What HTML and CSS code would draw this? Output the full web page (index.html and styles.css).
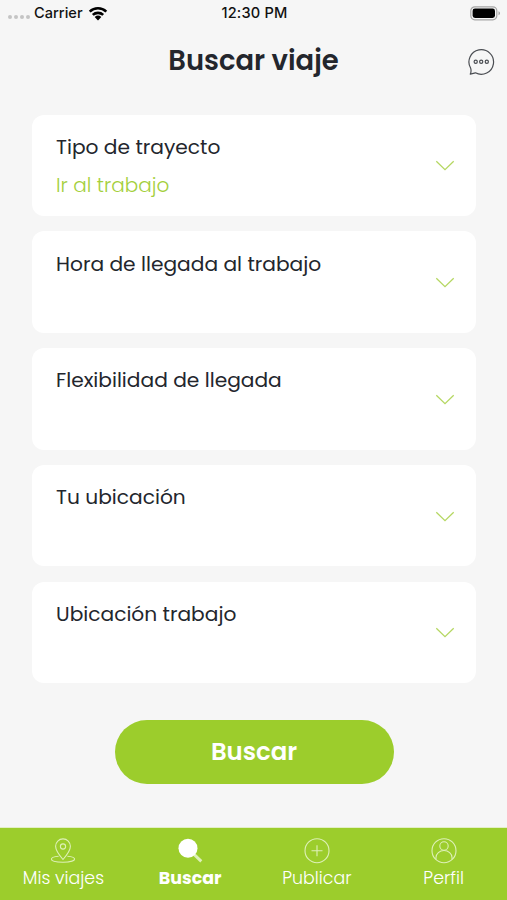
FILE: index.html
```html
<!DOCTYPE html>
<html lang="es">
<head>
    <meta charset="UTF-8">
    <meta name="viewport" content="width=device-width, initial-scale=1.0">
    <title>Buscar viaje</title>
    <link rel="stylesheet" href="styles.css">
</head>
<body>

    <!-- Status Bar -->
    <div class="status-bar">
        <div class="status-left">
            <span class="signal"><i></i><i></i><i></i><i></i></span>
            <span class="carrier">Carrier</span>
            <svg class="wifi" width="20" height="15" viewBox="0 0 20 15">
                <path d="M1.7 5.6a12 12 0 0 1 16.6 0M4.8 8.9a7.6 7.6 0 0 1 10.4 0" fill="none" stroke="#000" stroke-width="2.6"/>
                <path d="M6.7 11a5 5 0 0 1 6.6 0L10 14.4z" fill="#000"/>
            </svg>
        </div>
        <span class="time">12:30 PM</span>
        <svg class="battery" width="31" height="15" viewBox="0 0 31 15">
            <rect x=".8" y=".8" width="26" height="13" rx="4" fill="none" stroke="#a5a5a5" stroke-width="1.2"/>
            <rect x="2.6" y="2.6" width="22.4" height="9.4" rx="2.4" fill="#000"/>
            <path d="M28.5 5.3q1.5.6 1.5 2t-1.5 2z" fill="#a5a5a5"/>
        </svg>
    </div>

    <!-- Header -->
    <header>
        <h1>Buscar viaje</h1>
        <svg class="chat" width="28" height="28" viewBox="0 0 28 28" fill="none" stroke="#4a4d52" stroke-width="1.2">
            <path d="M3.7 20.3A12.3 12.3 0 1 1 8.4 24.8L3.2 26.2Q4.6 23.4 3.7 20.3z" stroke-linejoin="round"/>
            <circle cx="8.7" cy="13.7" r="1.6"/>
            <circle cx="14.2" cy="13.7" r="1.6"/>
            <circle cx="19.8" cy="13.7" r="1.6"/>
        </svg>
    </header>

    <!-- Search Options -->
    <main>
        <section class="option">
            <div>
                <h2>Tipo de trayecto</h2>
                <p>Ir al trabajo</p>
            </div>
            <svg class="arrow" width="20" height="12" viewBox="0 0 20 12"><path d="M1.3 1.3 10 9.7l8.7-8.4"/></svg>
        </section>
        <section class="option">
            <h2>Hora de llegada al trabajo</h2>
            <svg class="arrow" width="20" height="12" viewBox="0 0 20 12"><path d="M1.3 1.3 10 9.7l8.7-8.4"/></svg>
        </section>
        <section class="option">
            <h2>Flexibilidad de llegada</h2>
            <svg class="arrow" width="20" height="12" viewBox="0 0 20 12"><path d="M1.3 1.3 10 9.7l8.7-8.4"/></svg>
        </section>
        <section class="option">
            <h2>Tu ubicación</h2>
            <svg class="arrow" width="20" height="12" viewBox="0 0 20 12"><path d="M1.3 1.3 10 9.7l8.7-8.4"/></svg>
        </section>
        <section class="option">
            <h2>Ubicación trabajo</h2>
            <svg class="arrow" width="20" height="12" viewBox="0 0 20 12"><path d="M1.3 1.3 10 9.7l8.7-8.4"/></svg>
        </section>
        <button class="search">Buscar</button>
    </main>

    <!-- Tab Bar -->
    <nav>
        <a href="#">
            <svg width="26" height="26" viewBox="0 0 26 26">
                <path d="M13 21.5Q5.6 13 5.6 8.3a7.4 7.4 0 0 1 14.8 0Q20.4 13 13 21.5z"/>
                <circle cx="13" cy="8.5" r="2.6"/>
                <path d="M8.6 18.2C4 18.6 1.4 19.7 1.4 21c0 1.9 5 3.2 11.6 3.2s11.6-1.3 11.6-3.2c0-1.3-2.6-2.4-7.2-2.8"/>
            </svg>
            <span>Mis viajes</span>
        </a>
        <a href="#" class="active">
            <svg width="26" height="26" viewBox="0 0 26 26">
                <path d="M17.3 16.6l7 6.7" stroke-width="3"/>
                <circle cx="11" cy="10.3" r="9.5" fill="#fff" stroke="none"/>
            </svg>
            <span>Buscar</span>
        </a>
        <a href="#">
            <svg width="26" height="26" viewBox="0 0 26 26">
                <circle cx="13" cy="12.7" r="12"/>
                <path d="M13 7.2v11M7.5 12.7h11"/>
            </svg>
            <span>Publicar</span>
        </a>
        <a href="#">
            <svg width="26" height="26" viewBox="0 0 26 26">
                <circle cx="13" cy="12.7" r="12"/>
                <circle cx="13" cy="8" r="4.2"/>
                <path d="M5 21.2v-1.7a8 7 0 0 1 16 0v1.7"/>
            </svg>
            <span>Perfil</span>
        </a>
    </nav>

</body>
</html>
```
FILE: styles.css
```css
* {
    box-sizing: border-box;
}
body {
    font-family: Poppins, Inter, sans-serif;
    margin: 0;
    height: 900px;
    display: flex;
    flex-direction: column;
    overflow: hidden;
    background-color: #f6f6f6;
    color: #23262d;
}
h1, h2, p {
    margin: 0;
}
svg {
    display: block;
    flex-shrink: 0;
}
.status-bar {
    display: grid;
    grid-template-columns: 1fr auto 1fr;
    align-items: center;
    height: 26px;
    padding: 0 6px 0 8px;
    font-family: Inter, sans-serif;
    font-size: 14.6px;
    font-weight: 500;
    color: #111;
}
.status-left {
    display: flex;
    align-items: center;
}
.time {
    letter-spacing: 0.2px;
}
.signal {
    display: flex;
    gap: 2px;
    width: 26px;
    padding-top: 8px;
}
.signal i {
    width: 4px;
    height: 4px;
    border-radius: 50%;
    background-color: #c4c4c4;
}
.wifi {
    margin-left: 5px;
}
.battery {
    justify-self: end;
}
header {
    display: grid;
    grid-template-columns: 1fr 28px;
    align-items: center;
    height: 68px;
    padding: 2px 12px 0 40px;
}
h1 {
    text-align: center;
    font-size: 27.4px;
    line-height: 30px;
    font-weight: 600;
}
.chat {
    margin-top: 2px;
}
main {
    flex: 1;
    display: flex;
    flex-direction: column;
    gap: 15.2px;
    padding: 20.8px 31px 0 32px;
}
.option {
    display: flex;
    justify-content: space-between;
    height: 101.5px;
    padding: 17.2px 21px 0 24px;
    border-radius: 12px;
    background-color: #fff;
}
h2, .option p {
    font-size: 20.2px;
    line-height: 31px;
    font-weight: 400;
    white-space: nowrap;
}
.option p {
    margin-top: 7px;
    font-size: 20px;
    font-weight: 300;
    color: #a4cf3c;
}
.arrow {
    margin-top: 28.5px;
    fill: none;
    stroke: #b5d762;
    stroke-width: 1.3;
}
.search {
    align-self: center;
    width: 279px;
    height: 64px;
    margin-top: 21.5px;
    padding: 0;
    border: none;
    border-radius: 32px;
    background-color: #9ccd2c;
    color: #fff;
    font-family: inherit;
    font-size: 24.4px;
    font-weight: 600;
    cursor: pointer;
}
nav {
    display: grid;
    grid-template-columns: repeat(4, 1fr);
    height: 73px;
    padding-top: 10px;
    border-top: 1px solid #e3efc6;
    background-color: #9ccd2c;
}
nav a {
    display: flex;
    flex-direction: column;
    align-items: center;
    color: #fff;
    text-decoration: none;
    font-size: 17.4px;
    line-height: 24px;
    font-weight: 300;
}
nav span {
    margin-top: 2px;
    white-space: nowrap;
}
nav svg {
    fill: none;
    stroke: #def0b8;
    stroke-width: 1.1;
}
nav .active {
    font-weight: 700;
}
```
